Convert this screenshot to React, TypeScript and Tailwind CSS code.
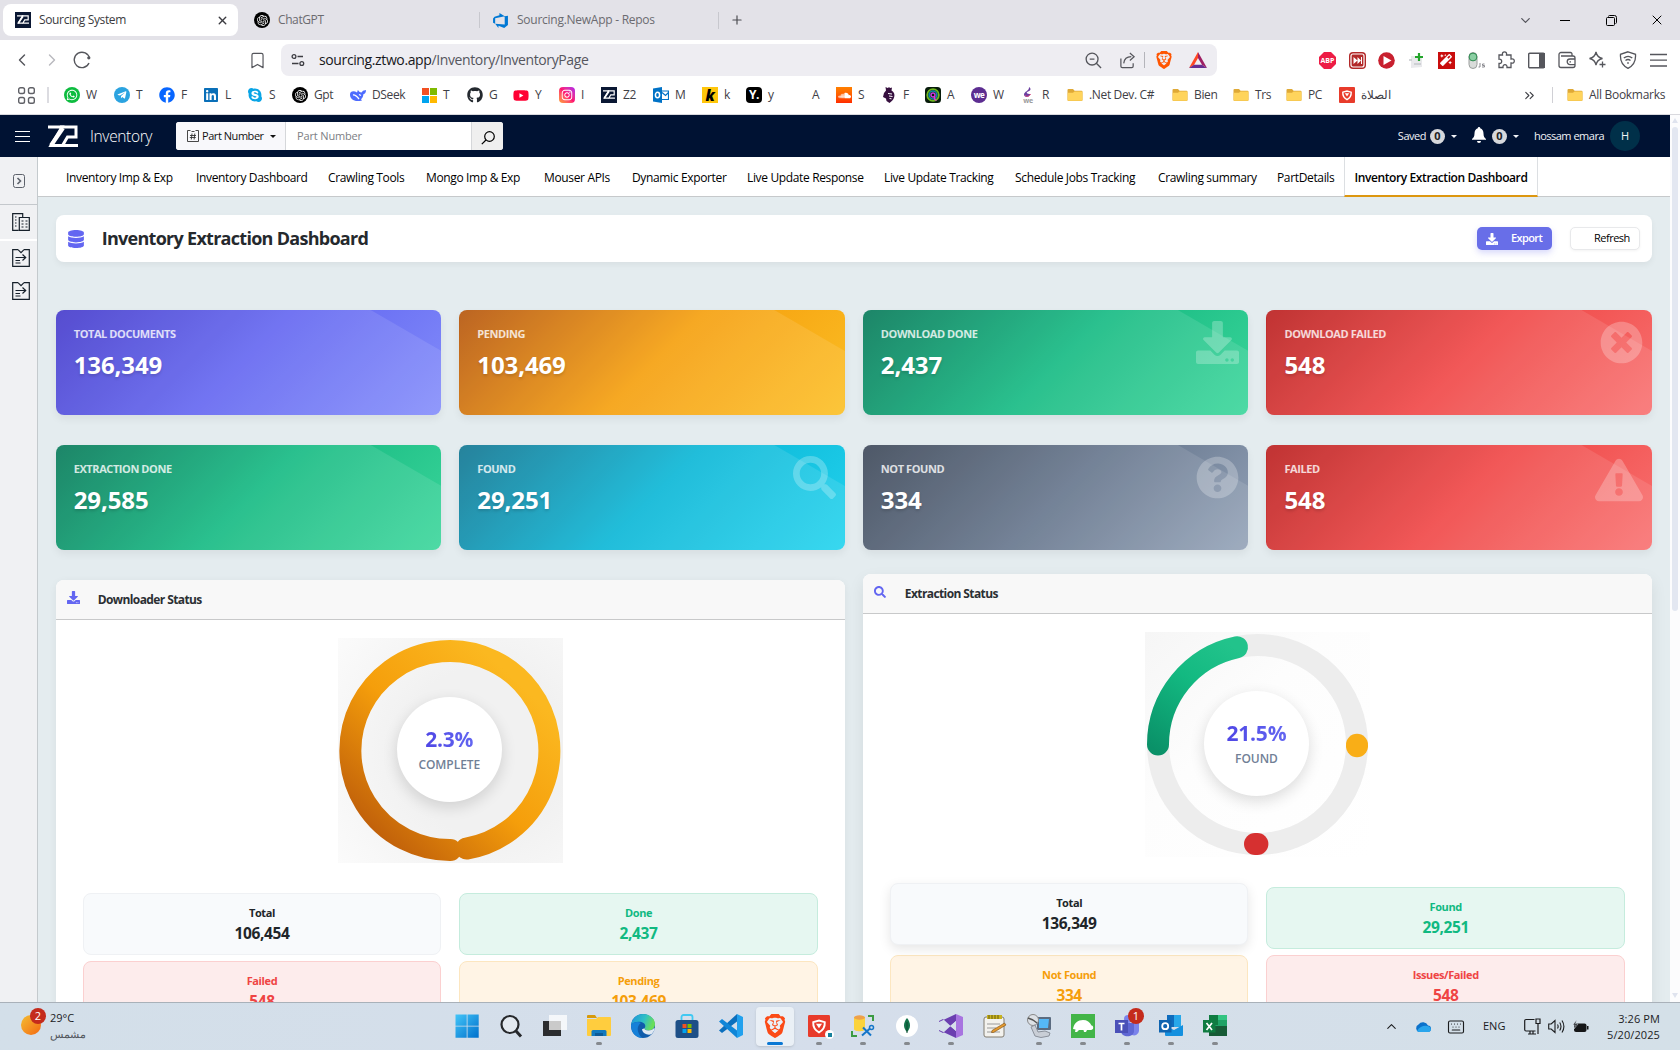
import React from "react";
import {
  FaWhatsapp, FaTelegramPlane, FaFacebook, FaLinkedin, FaSkype, FaGithub, FaYoutube, FaInstagram, FaSoundcloud,
  FaDownload, FaTimesCircle, FaSearch, FaQuestionCircle, FaExclamationTriangle, FaDatabase, FaMagic,
} from "react-icons/fa";
import { SiOpenai, SiBrave } from "react-icons/si";
import { VscAzureDevops } from "react-icons/vsc";
import { ChevronLeft, ChevronRight, ChevronDown, ChevronUp, ChevronsRight, X, Plus, Bookmark, Keyboard } from "lucide-react";

function Z2({ className }: { className: string }) {
  return (
    <svg viewBox="0 0 30 23" className={className} fill="none" stroke="currentColor" strokeWidth="3">
      <path d="M0 2H14L3 20.5H14" />
      <path d="M12 2H28V12H19.5L14.5 20.5H30" />
      <path d="M3 20.5L15 3" strokeWidth="4" />
    </svg>
  );
}

function Z2Tile() {
  return <span className="flex size-4 shrink-0 items-center justify-center bg-[#0a1733] text-white"><Z2 className="w-3" /></span>;
}

function Gpt() {
  return <span className="flex size-4 shrink-0 items-center justify-center rounded-full bg-black text-white"><SiOpenai size={11} /></span>;
}

function Folder() {
  return (
    <svg viewBox="0 0 16 16" className="size-4 shrink-0">
      <path d="M.5 3a1 1 0 0 1 1-1H6l1.6 1.7H14.5a1 1 0 0 1 1 1V13a1 1 0 0 1-1 1h-13a1 1 0 0 1-1-1z" fill="#dfa936" />
      <path d="M.8 5.800H6L7.600 4.600h7a.8.8 0 0 1 .8.8V13a.8.8 0 0 1-.8.8H1.500a.8.8 0 0 1-.8-.8z" fill="#ffd45c" />
    </svg>
  );
}

function Shield({ className }: { className: string }) {
  return (
    <svg viewBox="0 0 16 16" className={className}>
      <rect width="16" height="16" rx="1" fill="#e83b2b" />
      <path d="M3.800 5.200L8 4l4.200 1.200c.2 3.500-1.500 6-4.200 7.400C5.300 11.200 3.600 8.700 3.800 5.200z" fill="none" stroke="#fff" strokeWidth="1.400" />
      <path d="M5.800 6.300h4.400L8 9.600z" fill="#fff" />
    </svg>
  );
}

function WinTiles() {
  return (
    <span className="grid size-[15px] shrink-0 grid-cols-2 gap-px">
      <i className="bg-[#f25022]" /><i className="bg-[#7fba00]" /><i className="bg-[#00a4ef]" /><i className="bg-[#ffb900]" />
    </span>
  );
}

const bookmarks: { w: string; label: string; icon: React.ReactNode }[] = [
  { w: "w-[50px]", label: "W", icon: <span className="flex size-4 items-center justify-center rounded-full bg-[#0dbc3f] text-white"><FaWhatsapp size={12} /></span> },
  { w: "w-[45px]", label: "T", icon: <span className="flex size-4 items-center justify-center rounded-full bg-[#2ba3e0] text-white"><FaTelegramPlane size={10} /></span> },
  { w: "w-[44px]", label: "F", icon: <FaFacebook size={16} color="#0866ff" /> },
  { w: "w-[44px]", label: "L", icon: <FaLinkedin size={16} color="#0a6fb8" /> },
  { w: "w-[45px]", label: "S", icon: <FaSkype size={16} color="#0aa5e6" /> },
  { w: "w-[58px]", label: "Gpt", icon: <Gpt /> },
  {
    w: "w-[71px]", label: "DSeek", icon: (
      <svg viewBox="0 0 16 16" className="size-4"><path d="M0 7.500C0 4 4 3.500 7 5.500c.7-1 .3-2 1-2.500 1 1.500 1.500 2.500 3.500 2.500L13 3.800l3-.8c0 2.500-1 4-2.600 4.300-.2 2.400-1 3.700-2.400 4.900l1 1.200C5 15.500 0 12.500 0 7.500z" fill="#4d6bfe" /><path d="M3 8c2.500-.5 4 1.500 6 4M9 7.500l2 1" stroke="#fff" strokeWidth="1.300" fill="none" /></svg>
    ),
  },
  { w: "w-[46px]", label: "T", icon: <WinTiles /> },
  { w: "w-[46px]", label: "G", icon: <FaGithub size={16} color="#24292f" /> },
  { w: "w-[46px]", label: "Y", icon: <FaYoutube size={17} color="#ff0033" /> },
  { w: "w-[42px]", label: "I", icon: <span className="flex size-4 items-center justify-center rounded bg-linear-to-tr from-[#ff9d2b] via-[#ff0f70] to-[#b012ee] text-white"><FaInstagram size={12} /></span> },
  { w: "w-[52px]", label: "Z2", icon: <Z2Tile /> },
  {
    w: "w-[49px]", label: "M", icon: (
      <svg viewBox="0 0 16 16" className="size-4"><path d="M0 1.500L9 0v16L0 14.500z" fill="#0072c6" /><path d="M9 4h6.500v8.500H9M9 5.500l3.500 3 3-3" fill="none" stroke="#0072c6" strokeWidth="1.200" /><ellipse cx="4.500" cy="8" rx="2.100" ry="2.700" fill="none" stroke="#fff" strokeWidth="1.500" /></svg>
    ),
  },
  { w: "w-[44px]", label: "k", icon: <span className="flex size-4 items-center justify-center bg-[#ffc60b] text-[15px] font-extrabold italic leading-4 text-black">k</span> },
  { w: "w-[44px]", label: "y", icon: <span className="flex size-4 items-center justify-center rounded bg-black text-[12px] font-bold leading-4 text-white">Y.</span> },
  { w: "w-[46px]", label: "A", icon: null },
  { w: "w-[45px]", label: "S", icon: <span className="flex size-4 items-center justify-center bg-linear-to-b from-[#ff8000] to-[#ff2a00] text-white"><FaSoundcloud size={13} /></span> },
  {
    w: "w-[44px]", label: "F", icon: (
      <svg viewBox="0 0 16 16" className="size-4"><path d="M4.500 0l2 1L8 .2l1.500.9L11 .5l-.5 3C13 5 14 7 13.200 10c-.7 3-2.700 4.500-4.700 6L5.500 14 5 11.500 2 10l1-4 2-2.500z" fill="#37103f" /><path d="M7 6.500l4 .5M8 9l3.500.5M8.500 11.500l2 .3" stroke="#fff" strokeWidth="1" /></svg>
    ),
  },
  {
    w: "w-[46px]", label: "A", icon: (
      <svg viewBox="0 0 16 16" className="size-4"><rect width="16" height="16" rx="3.500" fill="#071b0b" /><circle cx="8" cy="8" r="5.800" fill="none" stroke="#6fb81e" strokeWidth="1.800" /><circle cx="8" cy="8" r="3.900" fill="none" stroke="#138ba8" strokeWidth="1.500" /><circle cx="8" cy="8" r="2" fill="none" stroke="#c63be0" strokeWidth="1.500" /><path d="M9.500 9v3l2 1.500" stroke="#e23bc9" strokeWidth="1.500" fill="none" /></svg>
    ),
  },
  { w: "w-[49px]", label: "W", icon: <span className="flex size-4 items-center justify-center rounded-full bg-[#5c2d91] text-[8px] font-bold leading-4 tracking-[-0.5px] text-white">we</span> },
  {
    w: "w-[47px]", label: "R", icon: (
      <span className="flex size-4 flex-col items-center">
        <svg viewBox="0 0 10 11" className="h-[11px] w-2.5"><path d="M6 0c3 2 1 4-1 4.500C2.500 5.500 4 7 7.500 7 6 11 1 10.500 1 7.500 1 4.500 6.500 4 6 0z" fill="#6b3fa0" /><path d="M2 8c1 2 4 2 5.500-1" stroke="#e0447c" fill="none" /></svg>
        <span className="text-[7px] font-bold leading-[5px] text-[#9a9a9a]">we</span>
      </span>
    ),
  },
  { w: "w-[105px]", label: ".Net Dev. C#", icon: <Folder /> },
  { w: "w-[61px]", label: "Bien", icon: <Folder /> },
  { w: "w-[53px]", label: "Trs", icon: <Folder /> },
  { w: "w-[53px]", label: "PC", icon: <Folder /> },
  { w: "w-[70px]", label: "الصلاة", icon: <Shield className="size-4" /> },
];

function TabStrip() {
  return (
    <div className="flex h-10 shrink-0 items-center bg-[#e3e2e8] text-[12px] text-[#6b6b70]">
      <div className="ml-[3px] flex h-8 w-[235px] items-center rounded-lg bg-white pl-3 text-[#3b3b40]">
        <Z2Tile />
        <span className="ml-2 w-[177px] tracking-[-0.35px]">Sourcing System</span>
        <X size={13} strokeWidth={2.600} />
      </div>
      <div className="ml-4 flex w-[226px] items-center gap-2 border-r border-[#c8c8ce] leading-4">
        <Gpt /><span className="tracking-[-0.4px]">ChatGPT</span>
      </div>
      <div className="flex w-[239px] items-center gap-2 border-r border-[#c8c8ce] pl-[12px] leading-4">
        <VscAzureDevops size={17} color="#0078d4" /><span className="tracking-[-0.26px]">Sourcing.NewApp - Repos</span>
      </div>
      <Plus className="ml-[11px]" size={14} strokeWidth={2} color="#4a4a50" />
      <div className="ml-auto flex items-center text-black">
        <span className="flex w-[34px] justify-center"><ChevronDown size={15} color="#55555c" /></span>
        <span className="flex w-[46px] justify-center"><i className="h-px w-2.5 bg-black" /></span>
        <span className="flex w-[46px] justify-center">
          <svg viewBox="0 0 11 11" className="size-[11px]" fill="none" stroke="currentColor"><rect x=".5" y="2.500" width="8" height="8" rx="1" /><path d="M2.500 1.500c0-.6.400-1 1-1h5a2 2 0 0 1 2 2v5c0 .6-.400 1-1 1" /></svg>
        </span>
        <span className="flex w-[46px] justify-center"><X size={16} strokeWidth={1.500} /></span>
      </div>
    </div>
  );
}

function Toolbar() {
  return (
    <div className="flex h-10 shrink-0 items-center bg-white text-[#55565c]">
      <ChevronLeft className="ml-3" size={20} strokeWidth={1.700} />
      <ChevronRight className="ml-2.5" size={20} strokeWidth={1.700} color="#b9b9bf" />
      <svg viewBox="0 0 18 18" className="ml-[11px] size-[18px]" fill="none" stroke="currentColor" strokeWidth="1.400"><path d="M16.500 7.500A7.700 7.700 0 1 0 16 12" /><circle cx="15.800" cy="6.800" r="1.600" fill="currentColor" stroke="none" /></svg>
      <Bookmark className="ml-[157px]" size={19} strokeWidth={1.500} />
      <div className="ml-[14px] flex h-8 w-[936px] items-center rounded-lg bg-[#eeedf2] pl-2.5">
        <svg viewBox="0 0 14 14" className="size-3.5" fill="none" stroke="#3c3c42" strokeWidth="1.300"><circle cx="3" cy="3.500" r="1.900" /><path d="M6.500 3.500H12M1 10.500h6.500" /><circle cx="10.800" cy="10.500" r="1.900" /></svg>
        <span className="ml-3.5 w-[766px] text-[14px] leading-5 tracking-[-0.38px] text-[#55565e]"><span className="text-[#17171c]">sourcing.ztwo.app</span>/Inventory/InventoryPage</span>
        <svg viewBox="0 0 18 18" className="size-[17px]" fill="none" stroke="currentColor" strokeWidth="1.400"><circle cx="7.500" cy="7.500" r="6.300" /><path d="M12 12l5 5M5 7.500h5" /></svg>
        <svg viewBox="0 0 18 18" className="ml-[17px] size-[17px]" fill="none" stroke="currentColor" strokeWidth="1.300"><path d="M2 7v8a1.500 1.500 0 0 0 1.500 1.500h10A1.500 1.500 0 0 0 15 15v-3M5 12c.5-4.500 3-7 8-7M11.500 1l4.500 4-4.500 4" /></svg>
        <span className="ml-2 h-4 w-px bg-[#b4b4ba]" />
        <SiBrave className="ml-2.5" size={18} color="#ff5500" />
        <svg viewBox="0 0 18 16" className="ml-4 h-4 w-[18px]"><path d="M9 0L0 16l5-3 4-7z" fill="#ff4724" /><path d="M0 16h18l-5-3.200H5z" fill="#662d91" /><path d="M9 0l9 16-5-3.200L9 6z" fill="#9e1f63" /></svg>
      </div>
      <div className="ml-[102px] flex w-[348px] items-center justify-between">
        <svg viewBox="0 0 17 17" className="size-[17px]"><path d="M5 0h7l5 5v7l-5 5H5l-5-5V5z" fill="#ed1c45" /><text x="8.500" y="11.200" textAnchor="middle" fontSize="7" fontWeight="700" fill="#fff">ABP</text></svg>
        <svg viewBox="0 0 17 17" className="size-[17px]"><rect width="17" height="17" rx="4" fill="#b22929" /><rect x="2" y="2" width="13" height="13" rx="2" fill="none" stroke="#fff" strokeWidth="1.200" /><path d="M4.500 5l4 3.500-4 3.500zM8.500 5l3.500 3.500L8.500 12zM12 5h1v7h-1z" fill="#fff" /></svg>
        <svg viewBox="0 0 17 17" className="size-[17px]"><circle cx="8.500" cy="8.500" r="8.300" fill="#c8202f" /><path d="M5.500 4l8 4.500-8 4.500z" fill="#fff" /></svg>
        <svg viewBox="0 0 17 17" className="size-[17px]"><path d="M3 4h11v11l-11 1z" fill="#e9e9ec" /><path d="M1 8h3M6 12h7" stroke="#c5c8cc" strokeWidth="1.500" /><path d="M11 1v8M7 5h8" stroke="#23a52b" strokeWidth="2.200" /></svg>
        <span className="flex size-[17px] items-center justify-center bg-[#c90d0d] text-white"><FaMagic size={12} /></span>
        <svg viewBox="0 0 17 17" className="size-[17px]"><rect x="1" y=".5" width="8" height="16" rx="4" fill="#d9dcda" stroke="#9a9d9c" /><circle cx="5" cy="5" r="3.900" fill="#8bcfa3" stroke="#2f8a50" /><path d="M12 11v4h-1.500M16.500 12h-2v1.500h2V15h-2.500" stroke="#8a8a90" fill="none" /></svg>
        <svg viewBox="0 0 18 18" className="size-[18px]" fill="none" stroke="currentColor" strokeWidth="1.300"><path d="M2 4h3.500C5 1.500 6.300.8 7.500.8S10 1.500 9.500 4H14v4c2.500-.5 3.300.8 3.300 2s-.8 2.500-3.300 2v4.500h-4c.3-2-.8-2.800-2-2.800s-2.300.8-2 2.800H2v-4c2 .2 2.700-1 2.700-2.200S4 8 2 8.200z" /></svg>
        <svg viewBox="0 0 17 17" className="size-[17px]"><rect x=".7" y="1.200" width="15.600" height="14.600" rx="1" fill="none" stroke="currentColor" strokeWidth="1.400" /><path d="M11 1h6v15h-6z" fill="currentColor" /></svg>
        <svg viewBox="0 0 18 18" className="size-[18px]" fill="none" stroke="currentColor" strokeWidth="1.300"><path d="M14 5V3a1.500 1.500 0 0 0-1.500-1.500H3A2 2 0 0 0 1 3.500v11a2 2 0 0 0 2 2h12a2 2 0 0 0 2-2V7a2 2 0 0 0-2-2H3M17 8h-5a2.800 2.800 0 0 0 0 5.600h5M11.500 10.800h1.500" /></svg>
        <svg viewBox="0 0 18 18" className="size-[18px]" fill="none" stroke="currentColor" strokeWidth="1.300"><path d="M8 1c.8 4 2.500 5.700 6.500 6.500C10.500 8.300 8.800 10 8 14c-.8-4-2.500-5.700-6.500-6.500C5.500 6.700 7.200 5 8 1zM14.500 10.500v6M11.500 13.500h6" /></svg>
        <svg viewBox="0 0 18 18" className="size-[18px]" fill="none" stroke="currentColor" strokeWidth="1.300"><path d="M9 .8l7.500 2.500C17 9.500 14.500 14.500 9 17.300 3.500 14.500 1 9.500 1.500 3.300z" /><path d="M4.800 7c2.500-2 6-2 8.500 0M6.500 9.500c1.500-1.200 3.500-1.200 5 0M8.200 12h1.600" /></svg>
        <svg viewBox="0 0 17 14" className="h-3.5 w-[17px]" fill="none" stroke="currentColor" strokeWidth="1.300"><path d="M0 1.500h17M0 7.200h17M0 13h17" /></svg>
      </div>
    </div>
  );
}

function BookmarksBar() {
  return (
    <div className="flex h-[35px] shrink-0 items-center border-b border-[#d9d9de] bg-white pb-1 text-[12px] tracking-[-0.35px] text-[#3f4046]">
      <svg viewBox="0 0 17 17" className="ml-[18px] size-[17px] shrink-0" fill="none" stroke="#606167" strokeWidth="1.400"><rect x=".7" y=".7" width="5.800" height="5.800" rx="1.800" /><rect x="10.500" y=".7" width="5.800" height="5.800" rx="1.800" /><rect x=".7" y="10.500" width="5.800" height="5.800" rx="1.800" /><rect x="10.500" y="10.500" width="5.800" height="5.800" rx="1.800" /></svg>
      <span className="mr-[15px] ml-3 h-4 w-0.5 shrink-0 bg-[#dcdce1]" />
      {bookmarks.map((b, i) => (
        <div key={i} className={"flex shrink-0 items-center gap-1.5 " + b.w}>
          <span className="flex size-4 shrink-0 items-center justify-center">{b.icon}</span>
          <span className="whitespace-nowrap">{b.label}</span>
        </div>
      ))}
      <ChevronsRight className="ml-[113px] shrink-0" size={15} strokeWidth={1.800} />
      <span className="mr-3.5 ml-[15px] h-4 w-px shrink-0 bg-[#d0d0d5]" />
      <Folder /><span className="ml-1.5 whitespace-nowrap tracking-[-0.3px]">All Bookmarks</span>
    </div>
  );
}

function Caret() {
  return <span className="inline-block border-x-[3px] border-t-[3px] border-x-transparent border-t-current" />;
}

function CountBadge() {
  return <span className="mr-1.5 flex size-[15px] items-center justify-center rounded-full bg-[#d6d8dc] text-[11px] font-bold text-[#222]">0</span>;
}

function AppHeader() {
  return (
    <header className="flex h-[42px] shrink-0 items-center bg-[#001233] text-white">
      <svg viewBox="0 0 15 11" className="ml-[15px] h-[11px] w-[15px]" stroke="currentColor"><path d="M0 .5h15M0 5.500h15M0 10.500h15" /></svg>
      <Z2 className="ml-[18px] h-[23px] w-[30px]" />
      <span className="ml-3 w-[86px] pt-0.5 text-[15.500px] font-light tracking-[-0.35px]">Inventory</span>
      <div className="flex h-7 w-[327px] overflow-hidden rounded-[3px] bg-white text-[11px]">
        <div className="flex w-[110px] items-center border-r border-[#d5d7da] bg-[#f8f8fb] pl-[11px] text-[#111]">
          <svg viewBox="0 0 12 12" className="size-3" fill="none" stroke="#333" strokeWidth=".9"><path d="M3.500.5h-3v11h11V.5h-3M4.500 1.500h3M5 3.500l-.7 6M7.800 3.500l-.7 6M3 5.500h6M2.800 7.500h6" /></svg>
          <span className="mr-1.5 ml-[3px] whitespace-nowrap tracking-[-0.45px]">Part Number</span>
          <Caret />
        </div>
        <div className="flex w-[185px] items-center pl-[11px] tracking-[-0.15px] text-[#7d8085]">Part Number</div>
        <div className="flex w-8 items-center justify-center border-l border-[#d5d7da] bg-[#efefef] pt-1 text-black">
          <svg viewBox="0 0 14 14" className="size-3.5" fill="none" stroke="currentColor" strokeWidth="1.200"><circle cx="8.500" cy="5.500" r="4.800" /><path d="M5 9L.8 13.200" /></svg>
        </div>
      </div>
      <div className="ml-auto flex items-center pr-[30px] text-[11px] text-[#f1f3f7]">
        <span className="mr-1 tracking-[-0.5px]">Saved</span>
        <CountBadge />
        <Caret />
        <svg viewBox="0 0 14 16" className="mr-1.5 ml-[15px] h-4 w-3.5 -translate-y-px" fill="#fff"><path d="M7 0a1.200 1.200 0 0 1 1.200 1.300C10.500 2 11.500 4 11.500 6.500c0 3 1 4.300 2.500 5.500v.8H0V12c1.500-1.200 2.500-2.500 2.500-5.500 0-2.500 1-4.500 3.300-5.200A1.200 1.200 0 0 1 7 0zM5 14h4a2 2 0 0 1-4 0z" /></svg>
        <CountBadge />
        <Caret />
        <span className="ml-[15px] tracking-[-0.5px]">hossam emara</span>
        <span className="ml-1.5 flex size-[30px] items-center justify-center rounded-full bg-[#003049]">H</span>
      </div>
    </header>
  );
}

const navTabs: { w: string; label: string }[] = [
  { w: "w-[130px]", label: "Inventory Imp & Exp" },
  { w: "w-[132px]", label: "Inventory Dashboard" },
  { w: "w-[98px]", label: "Crawling Tools" },
  { w: "w-[118px]", label: "Mongo Imp & Exp" },
  { w: "w-[88px]", label: "Mouser APIs" },
  { w: "w-[115px]", label: "Dynamic Exporter" },
  { w: "w-[137px]", label: "Live Update Response" },
  { w: "w-[131px]", label: "Live Update Tracking" },
  { w: "w-[143px]", label: "Schedule Jobs Tracking" },
  { w: "w-[119px]", label: "Crawling summary" },
  { w: "w-[67px]", label: "PartDetails" },
];

function NavTabs() {
  return (
    <nav className="flex h-10 shrink-0 border-b border-[#c6c9cb] bg-white pl-7 text-[12px] tracking-[-0.35px] text-black">
      {navTabs.map((t) => (
        <span key={t.label} className={"flex shrink-0 items-center pt-0.5 whitespace-nowrap " + t.w}>{t.label}</span>
      ))}
      <span className="-mb-px flex w-[194px] shrink-0 items-center justify-center whitespace-nowrap border-x border-b-2 border-x-[#dcdfe2] border-b-[#dd9710] pt-[3px] font-semibold tracking-[-0.4px]">Inventory Extraction Dashboard</span>
    </nav>
  );
}

function DocArrow() {
  return (
    <svg viewBox="0 0 18 18" className="size-[18px]" fill="none" stroke="#16202a" strokeWidth="1.200"><path d="M6 .7H.7v16.600h16.600V.7H12M6 .7l3 3 3-3M3.500 8.500h10M10.500 5.500l3.200 3-3.200 3M3.500 11.500H8M3.500 14h5" /></svg>
  );
}

function Sidebar() {
  return (
    <aside className="flex w-[38px] shrink-0 flex-col items-center border-r border-[#c4cacd] bg-[#f0f1f3]">
      <div className="flex h-[48px] w-full items-center justify-center border-b border-[#c4c8cc] text-[#5d626b]">
        <svg viewBox="0 0 12 14" className="h-3.5 w-3" fill="none" stroke="currentColor"><rect x=".5" y=".5" width="11" height="13" rx="2" /><path d="M4.500 4L7.500 7l-3 3" strokeWidth="1.600" /></svg>
      </div>
      <div className="flex h-[36px] w-full items-center justify-center border-b-2 border-white pl-[5px]">
        <svg viewBox="0 0 18 18" className="size-[18px]" fill="none" stroke="#16202a" strokeWidth="1.200"><path d="M6.500 17.300H.7V.7h10V4M7.300 4.500h10v12.800h-10zM3 4h1.500M3 7h1.500M3 10h1.500M3 13h1.500M9.500 8h2M13.500 8h2M9.500 11h2M13.500 11h2M9.500 14h2M13.500 14h2" /></svg>
      </div>
      <div className="flex h-[33px] items-center pl-[5px]"><DocArrow /></div>
      <div className="flex h-[33px] items-center pl-[5px]"><DocArrow /></div>
    </aside>
  );
}

const stats: { label: string; value: string; bg: string; icon: React.ReactNode }[] = [
  { label: "TOTAL DOCUMENTS", value: "136,349", bg: "from-[#4338ca] via-[#6366f1] to-[#848dfa]", icon: null },
  { label: "PENDING", value: "103,469", bg: "from-[#b45309] via-[#f59e0b] to-[#fbbf24]", icon: null },
  { label: "DOWNLOAD DONE", value: "2,437", bg: "from-[#047857] via-[#12b981] to-[#3ad69b]", icon: <FaDownload size={43} /> },
  { label: "DOWNLOAD FAILED", value: "548", bg: "from-[#b91c1c] via-[#ef4444] to-[#f87171]", icon: <FaTimesCircle size={43} /> },
  { label: "EXTRACTION DONE", value: "29,585", bg: "from-[#047857] via-[#12b981] to-[#3ad69b]", icon: null },
  { label: "FOUND", value: "29,251", bg: "from-[#0e7490] via-[#08b6d6] to-[#22d3ee]", icon: <FaSearch size={43} /> },
  { label: "NOT FOUND", value: "334", bg: "from-[#3b4657] via-[#64748b] to-[#94a3b8]", icon: <FaQuestionCircle size={43} /> },
  { label: "FAILED", value: "548", bg: "from-[#b91c1c] via-[#ef4444] to-[#f87171]", icon: <FaExclamationTriangle size={48} /> },
];

function StatCard({ s }: { s: (typeof stats)[number] }) {
  return (
    <div className={"relative h-[105px] overflow-hidden rounded-lg bg-linear-135 shadow-[0_4px_8px_rgba(0,0,0,0.06)] " + s.bg}>
      <div className="absolute inset-0 bg-white/10 [clip-path:polygon(0_0,315px_0,100%_41px,100%_100%,0_100%)]" />
      <div className="absolute top-[11px] right-[9px] text-white/25">{s.icon}</div>
      <div className="relative pt-[15px] pl-[18px] text-white">
        <div className="text-[11px] leading-[18px] font-bold tracking-[-0.42px] text-white/80">{s.label}</div>
        <div className="mt-[7px] text-[24px] leading-[30px] font-bold tracking-[-0.1px] [text-shadow:0_2px_3px_rgba(0,0,0,0.15)]">{s.value}</div>
      </div>
    </div>
  );
}

const tones = {
  plain: "border-[#eff1f4] bg-[#f8fafc] text-[#212529]",
  green: "border-[#c5ecdd] bg-[#e6f7f1] text-[#10b981]",
  red: "border-[#fbd0d0] bg-[#fdecec] text-[#ef4444]",
  amber: "border-[#fce6c0] bg-[#fff4e5] text-[#f59e0b]",
};

function Box({ label, value, tone, raised }: { label: string; value: string; tone: keyof typeof tones; raised?: boolean }) {
  return (
    <div className={"h-[62px] rounded-lg border pt-2.5 text-center font-bold " + tones[tone] + (raised ? " -translate-y-1 shadow-[0_4px_12px_rgba(0,0,0,0.1)]" : "")}>
      <div className="text-[11px] leading-[18px] tracking-[-0.4px]">{label}</div>
      <div className="text-[15.500px] leading-[22px] tracking-[-0.4px]">{value}</div>
    </div>
  );
}

function DonutLabel({ value, label }: { value: string; label: string }) {
  return (
    <div className="absolute top-[59px] left-[59px] flex size-[105px] flex-col items-center rounded-full bg-white pt-[29px] shadow-[0_5px_15px_rgba(0,0,0,0.14)]">
      <span className="bg-linear-to-r from-[#4f46e5] to-[#6366f1] bg-clip-text text-[21px] leading-[26px] font-bold tracking-[-0.2px] text-transparent">{value}</span>
      <span className="text-[12px] leading-[26px] font-semibold tracking-[-0.05px] text-[#718096]">{label}</span>
    </div>
  );
}

function Panel({ title, icon, raised, children }: { title: string; icon: React.ReactNode; raised?: boolean; children: React.ReactNode }) {
  return (
    <section className={"h-[600px] overflow-hidden rounded-lg bg-white " + (raised ? "-mt-1.5 shadow-[0_6px_16px_rgba(0,0,0,0.08)]" : "shadow-[0_2px_8px_rgba(0,0,0,0.06)]")}>
      <div className="flex h-10 items-center border-b border-[#c8c9ca] bg-[#f8f8f8] pl-[11px]">
        <span className={"mb-1 text-[#6366f1] " + (raised ? "mr-[19px]" : "mr-[18px]")}>{icon}</span>
        <span className="text-[12px] font-bold tracking-[-0.6px] text-[#2b2f33]">{title}</span>
      </div>
      <div className="px-[27px] pt-[18px]">{children}</div>
    </section>
  );
}

function Dashboard() {
  return (
    <main className="min-w-0 flex-1 overflow-hidden bg-[#e4ecef] pt-[18px] pr-[18px] pl-[17.700px]">
      <div className="flex h-[47px] items-center rounded-lg bg-white px-[11px] shadow-[0_3px_6px_rgba(0,0,0,0.05)]">
        <FaDatabase size={18} color="#6366f1" />
        <h1 className="ml-[17px] text-[18px] font-bold tracking-[-0.72px] text-[#25292d]">Inventory Extraction Dashboard</h1>
        <button className="ml-auto flex h-[23px] w-[75px] items-center rounded-[5px] bg-[#686ee8] pl-[9px] text-[11px] font-semibold tracking-[-0.6px] text-white shadow-[0_3px_6px_rgba(99,102,241,0.25)]">
          <FaDownload size={12} /><span className="ml-[13px]">Export</span>
        </button>
        <button className="ml-[18px] mr-px flex h-[23px] w-[70px] items-center rounded-[5px] border border-[#e8e9eb] bg-white pl-[23px] text-[11px] font-medium tracking-[-0.5px] text-black shadow-[0_1px_3px_rgba(0,0,0,0.05)]">Refresh</button>
      </div>
      <div className="mt-12 grid grid-cols-4 gap-x-[18px] gap-y-[30px]">
        {stats.map((s, i) => <StatCard key={i} s={s} />)}
      </div>
      <div className="mt-[30px] grid grid-cols-2 items-start gap-[18px]">
        <Panel title="Downloader Status" icon={<FaDownload size={13} />}>
          <div className="relative mx-auto size-[225px] bg-[radial-gradient(circle_at_65%_50%,#f1f1f1_45%,#fbfbfb_100%)]">
            <svg viewBox="0 0 225 225" className="size-full" fill="none" strokeWidth="22" strokeLinecap="round">
              <defs><linearGradient id="amber" gradientUnits="userSpaceOnUse" x1="35" y1="190" x2="175" y2="40"><stop offset="0" stopColor="#c2620a" /><stop offset=".5" stopColor="#f59e0b" /><stop offset="1" stopColor="#fbb820" /></linearGradient></defs>
              <path d="M128.500 210.600A99.500 99.500 0 1 0 112.500 212" stroke="url(#amber)" />
            </svg>
            <DonutLabel value="2.3%" label="COMPLETE" />
          </div>
          <div className="mt-[30px] grid grid-cols-2 gap-x-[18px] gap-y-1.5">
            <Box label="Total" value="106,454" tone="plain" />
            <Box label="Done" value="2,437" tone="green" />
            <Box label="Failed" value="548" tone="red" />
            <Box label="Pending" value="103,469" tone="amber" />
          </div>
        </Panel>
        <Panel title="Extraction Status" icon={<FaSearch size={12} />} raised>
          <div className="relative mx-auto size-[225px] bg-linear-to-br from-[#f6f6f6] via-[#fdfdfd] via-40% to-white">
            <svg viewBox="0 0 225 225" className="size-full" fill="none" strokeWidth="22" strokeLinecap="round">
              <defs><linearGradient id="green" gradientUnits="userSpaceOnUse" x1="20" y1="125" x2="95" y2="20"><stop offset="0" stopColor="#0a9168" /><stop offset=".6" stopColor="#13b981" /><stop offset="1" stopColor="#22c38b" /></linearGradient></defs>
              <circle cx="112.500" cy="112.500" r="99.500" stroke="#ededed" />
              <path d="M13 112.500A99.500 99.500 0 0 1 92 15.200" stroke="url(#green)" />
              <path d="M212 112.800v1.400" stroke="#f9ae17" />
              <path d="M110 212h2.400" stroke="#d63030" />
            </svg>
            <DonutLabel value="21.5%" label="FOUND" />
          </div>
          <div className="mt-[30px] grid grid-cols-2 gap-x-[18px] gap-y-1.5">
            <Box label="Total" value="136,349" tone="plain" raised />
            <Box label="Found" value="29,251" tone="green" />
            <Box label="Not Found" value="334" tone="amber" />
            <Box label="Issues/Failed" value="548" tone="red" />
          </div>
        </Panel>
      </div>
    </main>
  );
}

const apps: { dot: boolean; active?: boolean; icon: React.ReactNode }[] = [
  { dot: false, icon: <svg viewBox="0 0 24 24" className="size-6"><defs><linearGradient id="win" x1="0" y1="0" x2="1" y2="1"><stop stopColor="#43c5f8" /><stop offset="1" stopColor="#0070cc" /></linearGradient></defs><path d="M.5.500h11.200v11.200H.5zM12.500.500h11.200v11.200H12.500zM.5 12.500h11.200v11.200H.5zM12.500 12.500h11.200v11.200H12.500z" fill="url(#win)" /></svg> },
  { dot: false, icon: <svg viewBox="0 0 24 24" className="size-6" fill="none" stroke="#26282b"><circle cx="11" cy="10.500" r="8.500" strokeWidth="2.200" fill="#e3e9ef" /><path d="M17 17l5 5.500" strokeWidth="3" /></svg> },
  { dot: false, icon: <svg viewBox="0 0 24 24" className="size-6"><path d="M0 7h18v15H0z" fill="#2c2d2f" /><path d="M6 1h18v15H6z" fill="#fff" opacity=".75" /></svg> },
  { dot: true, icon: <svg viewBox="0 0 24 24" className="size-6"><path d="M0 2a1 1 0 0 1 1-1h7l2 3H0z" fill="#d79a0b" /><path d="M0 5h9l2-2h12a1 1 0 0 1 1 1v17a1 1 0 0 1-1 1H1a1 1 0 0 1-1-1z" fill="#ffcd3e" /><path d="M4.500 22v-4.500A1.500 1.500 0 0 1 6 16h12a1.500 1.500 0 0 1 1.500 1.500V22z" fill="#1179bf" /><path d="M8 19h8v3H8z" fill="#0b5a97" /></svg> },
  { dot: false, icon: <svg viewBox="0 0 24 24" className="size-6"><defs><linearGradient id="edge" x1="0" y1="0" x2="1" y2=".3"><stop stopColor="#1c8fdc" /><stop offset=".6" stopColor="#2fc0c5" /><stop offset="1" stopColor="#6ade5a" /></linearGradient></defs><circle cx="12" cy="12" r="12" fill="#0f5cab" /><path d="M0 11C1 4 6 0 12 0c7 0 12 5 12 10 0 4-3 6.500-6.500 6.500-3 0-4.500-1.200-4-2.300 1.500-1.700 1-5-2.500-6C6 7 1.500 8.500 0 11z" fill="url(#edge)" /><path d="M13.500 14.200c-.5 1.100 1 2.300 4 2.300 2.500 0 4.500-1 5.500-2.500l.8.800c-.6 2-1.800 4-3.300 5.400-4 1.500-9-1-9.500-5z" fill="#dfe8f2" /><path d="M0 11c2-3 7-4 10-2-5 3-4 10 1 15C4 23.500 0 18 0 11z" fill="#1680d8" /></svg> },
  { dot: false, icon: <svg viewBox="0 0 24 24" className="size-6"><path d="M6.500 7V3a2 2 0 0 1 2-2h7a2 2 0 0 1 2 2v4" stroke="#40c8f2" strokeWidth="1.800" fill="none" /><rect x=".5" y="6" width="23" height="18" rx="2.500" fill="#1d4f87" /><path d="M7.500 10h4v4h-4z" fill="#f25022" /><path d="M12.500 10h4v4h-4z" fill="#7fba00" /><path d="M7.500 15h4v4h-4z" fill="#00a4ef" /><path d="M12.500 15h4v4h-4z" fill="#ffb900" /></svg> },
  { dot: false, icon: <svg viewBox="0 0 24 24" className="size-6"><path d="M18 0l6 3v18l-6 3z" fill="#22a1ee" /><path d="M18 0v7.500L3 19l-3-2.500z" fill="#0b6fbd" /><path d="M18 24v-7.500L3 5 0 7.500z" fill="#0f86d8" /></svg> },
  { dot: true, active: true, icon: <SiBrave size={24} color="#fb4b17" /> },
  { dot: true, icon: <span className="relative flex size-[22px]"><Shield className="size-[22px]" /><i className="absolute -right-1 -bottom-0.5 flex size-[9px] items-center justify-center rounded-full bg-white"><i className="size-1 bg-[#16809c]" /></i></span> },
  { dot: true, icon: <svg viewBox="0 0 24 24" className="size-6"><path d="M3 3v12c0 3 11 3 11 0V3z" fill="#fbd33c" /><ellipse cx="8.500" cy="3.500" rx="5.500" ry="2.200" fill="#eea14a" /><path d="M17 2h5v5M6 22H1v-5" stroke="#3b9b42" strokeWidth="2" fill="none" /><path d="M11 21.500l8-7M12 13.500l8 8" stroke="#1576c9" strokeWidth="2" /><circle cx="20.500" cy="13.500" r="2" fill="none" stroke="#1576c9" strokeWidth="1.500" /></svg> },
  { dot: true, icon: <svg viewBox="0 0 24 24" className="size-6"><circle cx="12" cy="12" r="11" fill="#fff" /><path d="M12 4c4 5 4 10 0 14-4-4-4-9 0-14z" fill="#12734a" /><path d="M12 8v11" stroke="#0a4b2f" /></svg> },
  { dot: true, icon: <svg viewBox="0 0 24 24" className="size-6"><path d="M17 0l7 3v18l-7 3z" fill="#a874e0" /><path d="M17 0v7L4 19l-4-2V8zM17 24v-7L4 5 0 7v9z" fill="#6b3fb0" /><path d="M3 9l4 3-4 3z" fill="#d9dfe9" /><path d="M17 7v10l-6-5z" fill="#d6dee9" /></svg> },
  { dot: false, icon: <svg viewBox="0 0 24 24" className="size-6"><rect x="1" y="3" width="20" height="20" rx="2" fill="#f3f2ee" stroke="#827c71" /><path d="M4 1h15v4H4z" fill="#c8b31f" /><path d="M6 1v4M9 1v4M12 1v4M15 1v4" stroke="#665a10" /><path d="M4 10h13M4 14h9M4 18h13" stroke="#9a9a9a" /><path d="M9 16.500L21.500 9l1.500 2-12.500 7.500H8.500z" fill="#e39a30" stroke="#7a4b12" strokeWidth=".6" /></svg> },
  { dot: true, icon: <svg viewBox="0 0 24 24" className="size-6"><rect x="10" y="3" width="14" height="13" rx="1" fill="#5b6b80" /><path d="M12 5h10l-1 9h-9z" fill="#55b8f7" /><circle cx="6" cy="6" r="5.500" fill="#dde1e6" stroke="#888" /><path d="M6 6L1 4M6 6l4 3" stroke="#555" strokeWidth="1.500" /><path d="M4 13l4-2 3 7 7-1 5 2-1 3-8 1.500-6-1.500z" fill="#c9ced6" stroke="#8b919b" /></svg> },
  { dot: true, icon: <svg viewBox="0 0 24 24" className="size-6"><path d="M0 0h24v24H0z" fill="#43b548" /><path d="M2 15C3 9 7 6 12 6c4 0 7 2 8.500 5.500 1.500 0 2 1.500 1.500 3.500-2 1.500-4 1-6 1l-1 2h-2l-.5-2H8l-2 2H4l.5-2.500z" fill="#fff" /></svg> },
  { dot: true, icon: <span className="relative size-6"><svg viewBox="0 0 24 24" className="size-6"><circle cx="20" cy="8" r="3" fill="#5059c9" /><path d="M14 9h10v8a5 5 0 0 1-7 4z" fill="#7b83eb" /><circle cx="13" cy="5" r="4" fill="#7b83eb" /><path d="M6 9h13v8c0 7-13 7-13 0z" fill="#5f67d4" /><path d="M0 6h13v13H0z" fill="#4a50b8" /><path d="M3.500 9.500h6M6.500 9.500v7" stroke="#fff" strokeWidth="1.700" /></svg><i className="absolute -top-[6px] left-[13px] flex size-4 items-center justify-center rounded-full bg-[#c42b1c] text-[11px] not-italic text-white">1</i></span> },
  { dot: true, icon: <svg viewBox="0 0 24 24" className="size-6"><path d="M8 1h14v12H8z" fill="#28a8ea" /><path d="M8 1h7v12H8z" fill="#0f6cbd" /><path d="M6 12l9 4 9-5v10a1 1 0 0 1-1 1H7a1 1 0 0 1-1-1z" fill="#1490df" /><path d="M0 6h12.500v12.500H0z" fill="#0f64b0" /><circle cx="6.200" cy="12.200" r="3" fill="none" stroke="#fff" strokeWidth="1.800" /></svg> },
  { dot: true, icon: <svg viewBox="0 0 24 24" className="size-6"><path d="M6 1h18v21H6z" fill="#21a366" /><path d="M6 1h9v10H6z" fill="#107c41" /><path d="M15 1h9v5h-9z" fill="#33c481" /><path d="M6 12h18v10H6z" fill="#185c37" /><path d="M0 6h12.500v12.500H0z" fill="#107c41" /><path d="M3.500 9l5.500 7M9 9l-5.500 7" stroke="#fff" strokeWidth="1.700" /></svg> },
];

function Taskbar() {
  return (
    <footer className="flex h-12 shrink-0 items-start border-t border-[#a9b1b9] bg-linear-to-r from-[#d3dfe9] via-[#d5deeb] to-[#d4e0e8] text-[11px] text-[#1b1c1e]">
      <div className="flex w-[445px] pt-[7px] pl-[21px]">
        <div className="relative mt-[5px] size-5 rounded-full bg-linear-to-br from-[#f2bd33] to-[#f2660f]">
          <i className="absolute -top-[7px] left-[9px] flex size-4 items-center justify-center rounded-full bg-[#c42b1c] text-[11px] not-italic text-white">2</i>
        </div>
        <div className="ml-[9px] leading-4"><div>29°C</div><div className="text-[#54585d]">مشمس</div></div>
      </div>
      <div className="flex pt-1">
        {apps.map((a, i) => (
          <div key={i} className={"mx-[3px] flex h-[39px] w-[38px] flex-col items-center rounded pt-[7px] " + (a.active ? "bg-[#eaf0f6] shadow-sm" : "")}>
            <div className="flex h-6 items-center">{a.icon}</div>
            {a.dot && <i className={"mt-1 h-[3px] rounded-full " + (a.active ? "w-4 bg-[#0a78d4]" : "w-1.5 bg-[#85898e]")} />}
          </div>
        ))}
      </div>
      <div className="ml-auto flex h-full items-center pr-5">
        <ChevronUp size={15} strokeWidth={1.700} />
        <svg viewBox="0 0 17 11" className="ml-4 h-[11px] w-[17px]"><path d="M4 11a4 4 0 0 1-.5-7.500A5.500 5.500 0 0 1 13 4.500 3.300 3.300 0 0 1 13.500 11z" fill="#0c72cb" /><path d="M2 10c3-5 8-6 12-4.500a3 3 0 0 1 0 5.500H4z" fill="#29a5ec" /></svg>
        <Keyboard className="ml-[15px]" size={18} strokeWidth={1.500} />
        <span className="ml-[18px] w-[41px]">ENG</span>
        <svg viewBox="0 0 17 17" className="size-[17px]" fill="none" stroke="currentColor" strokeWidth="1.200"><path d="M10.500 1.500H2a1.300 1.300 0 0 0-1.300 1.300v9A1.300 1.300 0 0 0 2 13h9.500M4 16h8M6 13v3M9 13v3M12 1h4v4.500h-4zM14 5.500V16" /></svg>
        <svg viewBox="0 0 17 15" className="ml-[7px] h-[15px] w-[17px]" fill="none" stroke="currentColor" strokeWidth="1.100"><path d="M.7 5v5h2.500L7 13.500v-12L3.200 5zM9.500 5.500q1.300 2 0 4M11.700 3.500q2.600 4 0 8M14 1.500q3.800 6 0 12" /></svg>
        <svg viewBox="0 0 17 13" className="ml-[7px] h-[13px] w-[17px]"><rect x="2" y="3.500" width="12.500" height="8.500" rx="2" fill="#151617" /><path d="M15 6h1.500v3.500H15z" fill="#151617" /><path d="M4.500 0L1 5h2.500L2 9l4-5H3.500z" fill="#151617" stroke="#d5dfe9" strokeWidth=".5" /></svg>
        <div className="ml-[13px] w-[58px] text-right leading-4 tracking-[0.1px]"><div>3:26 PM</div><div>5/20/2025</div></div>
      </div>
    </footer>
  );
}

export default function App() {
  return (
    <div className="flex h-[1050px] w-[1680px] flex-col overflow-hidden bg-white font-['Open_Sans','Noto_Sans',sans-serif]">
      <TabStrip />
      <Toolbar />
      <BookmarksBar />
      <div className="flex min-h-0 flex-1">
        <div className="flex min-w-0 flex-1 flex-col">
          <AppHeader />
          <div className="flex min-h-0 flex-1">
            <Sidebar />
            <div className="flex min-w-0 flex-1 flex-col">
              <NavTabs />
              <Dashboard />
            </div>
          </div>
        </div>
        <div className="flex w-2.5 flex-col items-center bg-[#fcfcfd] pt-[3px]">
          <span className="border-x-[3px] border-b-[5px] border-x-transparent border-b-[#dfe3ee]" />
          <span className="mt-1 h-[484px] w-1.5 rounded-full bg-[#e3e7f1]" />
          <span className="mt-auto mb-1 border-x-[3px] border-t-[5px] border-x-transparent border-t-[#dfe3ee]" />
        </div>
      </div>
      <Taskbar />
    </div>
  );
}
